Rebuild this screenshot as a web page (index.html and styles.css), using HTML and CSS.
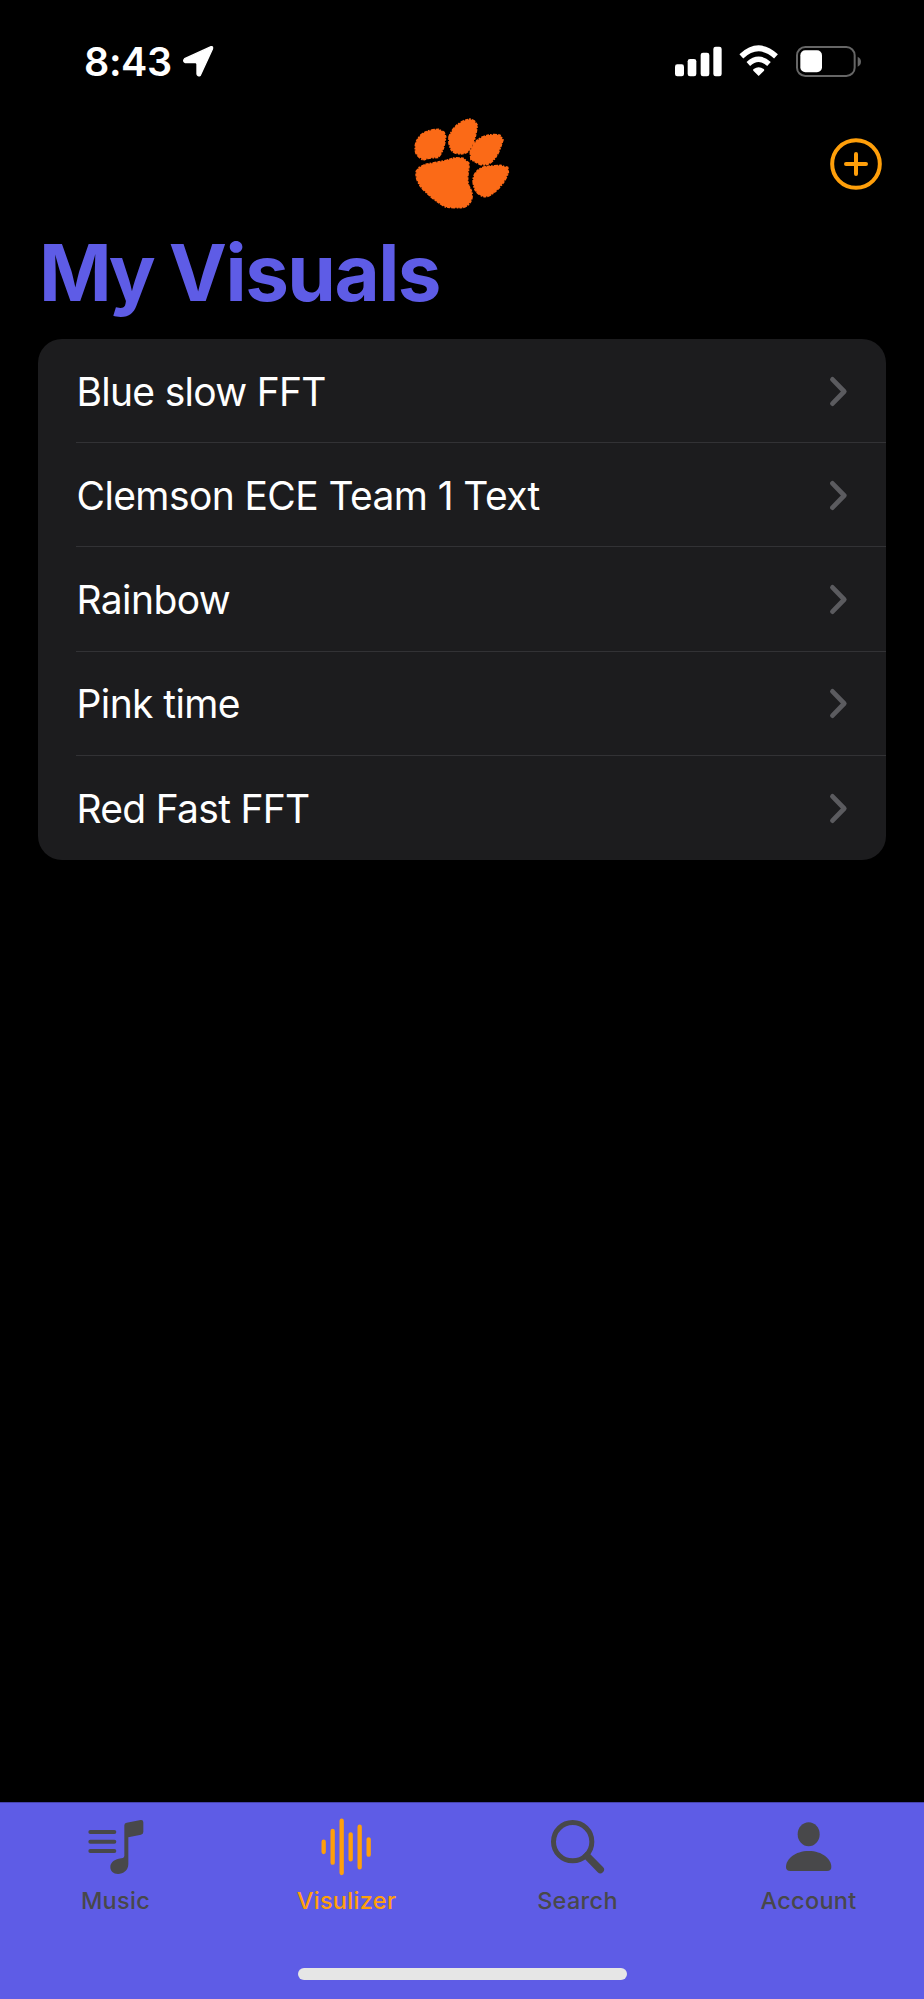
FILE: index.html
```html
<!DOCTYPE html>
<html lang="en">
<head>
<meta charset="utf-8">
<title>My Visuals</title>
<link rel="stylesheet" href="styles.css">
</head>
<body>
<div class="screen">
  <header class="status">
    <div class="status-left">
      <span class="time">8:43</span>
      <svg class="location" viewBox="0 0 96 96"><path d="M87 5 8 41Q1 49 10 53H40Q45 53 45 58V87Q47 95 55 91L91 13Q94 3 87 5Z" fill="#fff" stroke="#fff" stroke-width="4" stroke-linejoin="round"/></svg>
    </div>
    <svg class="indicators" viewBox="0 0 570 96">
      <g fill="#fff">
        <rect x="6" y="55" width="27" height="36" rx="7"/>
        <rect x="44" y="39" width="26" height="52" rx="7"/>
        <rect x="83" y="20" width="26" height="71" rx="7"/>
        <rect x="121" y="2" width="25" height="89" rx="7"/>
        <path d="M257 90 241 74Q239 71 242 69Q257 58 272 69Q275 71 273 74Z"/>
      </g>
      <g fill="none" stroke="#fff" stroke-width="17">
        <path d="M205 31Q257-17 309 31"/>
        <path d="M226 54Q257 26 288 54" stroke-width="16"/>
      </g>
      <rect x="372" y="3" width="173" height="87" rx="25" fill="none" stroke="#666" stroke-width="6"/>
      <rect x="382" y="13" width="65" height="66" rx="15" fill="#fff"/>
      <path d="M554 32Q564 37 564 47T554 62Z" fill="#666"/>
    </svg>
  </header>
  <nav class="navbar">
    <svg class="paw" viewBox="0 0 360 345">
      <g fill="#fb6a17" stroke="#fb6a17" stroke-width="5" stroke-dasharray="9 3 5 4 12 3" stroke-linejoin="round">
        <path d="M48 145C42 122 48 103 64 89C80 76 100 74 116 73L132 82L137 95C134 118 129 144 114 157L84 160L70 165Q58 160 48 145Z"/>
        <path d="M147 96C155 73 173 55 192 47L210 42L223 48L232 61C228 83 225 109 213 128C203 145 190 148 175 146C155 144 151 132 147 115Z"/>
        <path d="M211 142C215 119 233 100 255 93C272 88 289 88 300 91L309 104C302 127 294 151 278 168C266 180 254 181 240 178L213 164Z"/>
        <path d="M220 234C217 216 226 200 240 191C257 181 286 184 302 181L313 185L323 187L325 202C318 224 305 243 285 260C269 274 257 278 244 272C228 263 222 252 220 234Z"/>
        <path d="M49 199L58 187L77 178L105 173L140 166L165 158L190 160L206 174C209 189 202 205 203 224L206 243C217 257 221 277 209 294C199 309 183 309 162 308L137 306C119 296 104 286 86 269C61 248 45 225 49 199Z"/>
      </g>
    </svg>
    <svg class="add" viewBox="0 0 156 156" fill="none" stroke="#ff9f0a" stroke-width="12" stroke-linecap="round"><circle cx="78" cy="78" r="71.5"/><path d="M78 48v60M48 78h60"/></svg>
  </nav>
  <h1 class="title"><span class="title-lead">My</span> Visuals</h1>
  <ul class="list">
    <li class="row"><span class="tight">Blue slow FFT</span><svg class="chevron" viewBox="0 0 50 86"><path d="M7 7 42 43 7 79"/></svg></li>
    <li class="row"><span>Clemson ECE Team 1 Text</span><svg class="chevron" viewBox="0 0 50 86"><path d="M7 7 42 43 7 79"/></svg></li>
    <li class="row"><span>Rainbow</span><svg class="chevron" viewBox="0 0 50 86"><path d="M7 7 42 43 7 79"/></svg></li>
    <li class="row"><span>Pink time</span><svg class="chevron" viewBox="0 0 50 86"><path d="M7 7 42 43 7 79"/></svg></li>
    <li class="row"><span class="tight">Red Fast FFT</span><svg class="chevron" viewBox="0 0 50 86"><path d="M7 7 42 43 7 79"/></svg></li>
  </ul>
  <footer class="tabbar">
    <div class="tabs">
      <div class="tab">
        <svg class="tab-icon" viewBox="10 0 180 180"><path d="M23 42h72M23 71h72M23 99h72" stroke="currentColor" stroke-width="12" stroke-linecap="round"/><path d="M125 22Q125 15 132 14L174 6Q182 5 182 13V42Q182 48 175 50L137 58V138C137 157 122 168 106 168C92 168 83 159 83 147C83 135 93 125 108 122L120 120Q125 119 125 113Z" fill="currentColor"/></svg>
        <span>Music</span>
      </div>
      <div class="tab active">
        <svg class="tab-icon" viewBox="2 0 180 180"><path d="M22 71v31M49 39v95M76 8v157M103 49v75M130 26v122M157 64v46" stroke="currentColor" stroke-width="13" stroke-linecap="round"/></svg>
        <span>Visulizer</span>
      </div>
      <div class="tab">
        <svg class="tab-icon" viewBox="2 0 180 180"><circle cx="76" cy="71" r="57.500" fill="none" stroke="currentColor" stroke-width="15"/><path d="M119 114 159 155" stroke="currentColor" stroke-width="22" stroke-linecap="round"/></svg>
        <span>Search</span>
      </div>
      <div class="tab">
        <svg class="tab-icon" viewBox="2 0 180 180" fill="currentColor"><ellipse cx="91" cy="49" rx="33" ry="36"/><path d="M23 147C23 123 50 99 91 99S159 123 159 147Q159 159 146 159H36Q23 159 23 147Z"/></svg>
        <span>Account</span>
      </div>
    </div>
    <div class="home"></div>
  </footer>
</div>
</body>
</html>
```
FILE: styles.css
```css
* { box-sizing: border-box; }
body { margin: 0; background: #000; color: #fff; font-family: Inter, "Liberation Sans", sans-serif; }
svg { display: block; flex: none; overflow: visible; }
.screen { width: 924px; height: 1999px; display: flex; flex-direction: column; background: #000; }
.status { height: 105px; padding: 45px 61px 0 84px; display: flex; justify-content: space-between; align-items: flex-start; }
.status-left { display: flex; align-items: flex-start; }
.time { width: 98px; font-size: 39.5px; line-height: 34px; font-weight: 560; letter-spacing: -0.4px; }
.location { width: 32px; height: 32px; }
.indicators { width: 190px; height: 32px; margin-top: 1px; }
.navbar { height: 115px; padding-right: 42px; display: grid; grid-template-columns: 400px 120px 1fr; }
.paw { grid-column: 2; width: 120px; height: 115px; }
.add { width: 52px; height: 52px; justify-self: end; margin-top: 33px; }
.title { margin: 0; height: 119px; padding: 6px 0 0 39px; font-size: 78px; line-height: 94px; font-weight: 700; letter-spacing: -1.5px; color: #5e5ce6; white-space: nowrap; }
.title-lead { letter-spacing: -3.8px; }
.list { margin: 0 38px; padding: 0; list-style: none; background: #1c1c1e; border-radius: 24px; }
.row { height: 104.2px; margin-left: 38px; padding: 2px 39px 0 0; display: flex; align-items: center; justify-content: space-between; border-bottom: 1px solid #323235; font-size: 39px; line-height: 48px; letter-spacing: -0.6px; white-space: nowrap; }
.row:last-child { border-bottom: 0; }
.row span { padding-left: 0.5px; }
.row .tight { letter-spacing: -0.72px; }
.chevron { width: 17px; height: 29px; margin-bottom: 1px; fill: none; stroke: #5b5b5f; stroke-width: 14; stroke-linecap: round; stroke-linejoin: round; }
.tabbar { margin-top: auto; height: 197px; background: #5e5ce6; border-top: 1px solid #4644ad; display: flex; flex-direction: column; align-items: center; }
.tabs { width: 100%; display: grid; grid-template-columns: repeat(4, 1fr); padding-top: 15px; }
.tab { display: flex; flex-direction: column; align-items: center; color: #48484a; font-size: 23.5px; line-height: 28px; font-weight: 500; letter-spacing: 0.3px; }
.tab-icon { width: 60px; height: 60px; margin-bottom: 9px; }
.active { color: #ff9f0a; }
.home { width: 329px; height: 12px; border-radius: 6px; background: #e6e6e6; margin-top: 53px; }
```
